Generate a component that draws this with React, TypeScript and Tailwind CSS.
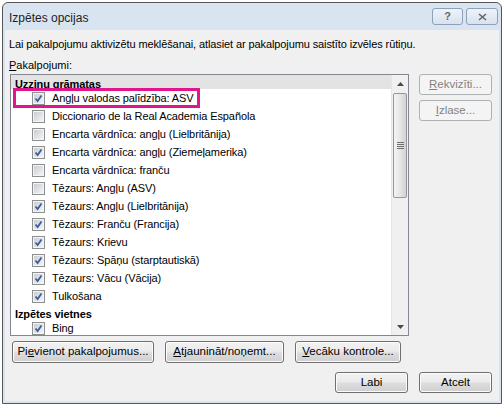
import type { ReactNode } from 'react'
import clsx from 'clsx'

type Row = { header: string; shaded?: boolean } | { label: string; checked?: boolean }

const rows: Row[] = [
  { header: 'Uzziņu grāmatas', shaded: true },
  { label: 'Angļu valodas palīdzība: ASV', checked: true },
  { label: 'Diccionario de la Real Academia Española' },
  { label: 'Encarta vārdnīca: angļu (Lielbritānija)' },
  { label: 'Encarta vārdnīca: angļu (Ziemeļamerika)', checked: true },
  { label: 'Encarta vārdnīca: franču' },
  { label: 'Tēzaurs: Angļu (ASV)' },
  { label: 'Tēzaurs: Angļu (Lielbritānija)', checked: true },
  { label: 'Tēzaurs: Franču (Francija)', checked: true },
  { label: 'Tēzaurs: Krievu', checked: true },
  { label: 'Tēzaurs: Spāņu (starptautiskā)', checked: true },
  { label: 'Tēzaurs: Vācu (Vācija)', checked: true },
  { label: 'Tulkošana', checked: true },
  { header: 'Izpētes vietnes' },
  { label: 'Bing', checked: true },
]

function Button({ children, className, disabled }: { children: ReactNode; className?: string; disabled?: boolean }) {
  return (
    <div
      className={clsx(
        'flex items-center justify-center rounded-[3px] border text-[11.5px]',
        disabled
          ? 'border-[#adb2b5] bg-[#f4f4f4] text-[#838383]'
          : 'border-[#707070] bg-[linear-gradient(#f2f2f2,#ebebeb_45%,#dddddd_55%,#cfcfcf)] text-black shadow-[inset_0_0_0_1px_#fbfbfb]',
        className
      )}
    >
      {children}
    </div>
  )
}

function CheckBox({ checked }: { checked?: boolean }) {
  return (
    <span className="relative block h-[13px] w-[13px] shrink-0 border border-[#8e8f8f] bg-[#f4f4f4]">
      <span className="absolute inset-[1px] bg-linear-to-br from-[#c9cdd3] to-[#f4f4f4]" />
      {checked && (
        <svg className="absolute left-0 top-0" width="11" height="11" viewBox="0 0 11 11">
          <path d="M2.5 5.5 L4.6 8 L8.5 2.5" fill="none" stroke="#3b5b9c" strokeWidth="1.8" />
        </svg>
      )}
    </span>
  )
}

function ScrollBar() {
  return (
    <div className="flex w-[17px] flex-col border-l border-[#e6e6e6] bg-[#f0f0f0]">
      <div className="flex h-[17px] items-center justify-center">
        <svg width="7" height="4" viewBox="0 0 7 4">
          <path d="M0 4 L3.5 0 L7 4 Z" fill="#4a4a4a" />
        </svg>
      </div>
      <div className="mx-[1px] mt-px flex h-[105px] items-center justify-center rounded-[2px] border border-[#979797] bg-linear-to-r from-[#f4f4f4] via-[#e6e6e6] to-[#d2d2d2]">
        <div className="flex w-[7px] flex-col gap-[1px]">
          <span className="h-px bg-[#6f6f6f]" />
          <span className="h-px bg-[#6f6f6f]" />
          <span className="h-px bg-[#6f6f6f]" />
          <span className="h-px bg-[#6f6f6f]" />
        </div>
      </div>
      <div className="flex-1" />
      <div className="flex h-[17px] items-center justify-center">
        <svg width="7" height="4" viewBox="0 0 7 4">
          <path d="M0 0 L7 0 L3.5 4 Z" fill="#4a4a4a" />
        </svg>
      </div>
    </div>
  )
}

function ServiceList() {
  return (
    <div className="flex h-[262px] w-[399px] border border-[#828790] bg-white">
      <div className="relative flex-1 overflow-hidden text-[11px] tracking-[-0.1px] text-black">
        {rows.map((row, i) =>
          'header' in row ? (
            <div key={i} className={clsx('h-[14px] pl-[4px] font-bold leading-[14px]', row.shaded && 'bg-[#e3e3e3]')}>
              <span className="relative top-[2px]">{row.header}</span>
            </div>
          ) : (
            <div key={i} className="flex h-[18px] items-center gap-[7px] pl-[21px]">
              <CheckBox checked={row.checked} />
              <span>{row.label}</span>
            </div>
          )
        )}
        {/* marker round the first entry */}
        <div className="absolute left-[2px] top-[13px] h-[20px] w-[187px] border-[3px] border-[#e2168c]" />
      </div>
      <ScrollBar />
    </div>
  )
}

export default function App() {
  return (
    <div className="h-[407px] w-[504px] bg-white pl-[2px] pt-[2px] font-['Liberation_Sans',Arial,sans-serif]">
      <div className="flex h-[402px] w-[500px] flex-col rounded-t-[6px] border border-[#565656] bg-[#d9e4f1] px-[2px] pb-[2px]">
        <div className="flex h-[27px] items-center justify-between pl-[4px] pr-[1px]">
          <span className="relative top-px text-[12px] text-[#1e1e1e]">Izpētes opcijas</span>
          <div className="flex gap-[3px]">
            <div className="flex h-[17px] w-[31px] items-center justify-center rounded-[3px] border border-[#8ea1b8] bg-linear-to-b from-[#eef3f9] to-[#d8e2ee] text-[11px] font-bold text-[#666]">
              ?
            </div>
            <div className="flex h-[17px] w-[32px] items-center justify-center rounded-[3px] border border-[#8ea1b8] bg-linear-to-b from-[#eef3f9] to-[#d8e2ee]">
              <svg width="9" height="8" viewBox="0 0 9 8">
                <path d="M1 1 L8 7 M8 1 L1 7" stroke="#666" strokeWidth="1.6" />
              </svg>
            </div>
          </div>
        </div>
        <div className="flex flex-1 flex-col bg-[#f0f0f0] pl-[4px] text-[11px] text-black">
          <p className="mt-[6px] leading-[16px] tracking-[-0.1px]">
            Lai pakalpojumu aktivizētu meklēšanai, atlasiet ar pakalpojumu saistīto izvēles rūtiņu.
          </p>
          <p className="mt-[5px] leading-[16px]">
            <u>P</u>akalpojumi:
          </p>
          <div className="ml-[1px] mt-[1px] flex gap-[10px]">
            <ServiceList />
            <div className="flex flex-col gap-[5px]">
              <Button disabled className="h-[21px] w-[73px]">
                <span>
                  <u>R</u>ekvizīti...
                </span>
              </Button>
              <Button disabled className="h-[21px] w-[73px]">
                <span>
                  <u>I</u>zlase...
                </span>
              </Button>
            </div>
          </div>
          <div className="ml-[3px] mt-[5px] flex gap-[11px]">
            <Button className="h-[22px] w-[142px]">
              <span>
                Pi<u>e</u>vienot pakalpojumus...
              </span>
            </Button>
            <Button className="h-[22px] w-[119px]">
              <span>
                <u>A</u>tjaunināt/noņemt...
              </span>
            </Button>
            <Button className="h-[22px] w-[106px]">
              <span>
                <u>V</u>ecāku kontrole...
              </span>
            </Button>
          </div>
          <div className="mt-[9px] flex justify-end gap-[11px] pr-[7px]">
            <Button className="h-[21px] w-[73px]">Labi</Button>
            <Button className="h-[21px] w-[73px]">Atcelt</Button>
          </div>
        </div>
      </div>
    </div>
  )
}
